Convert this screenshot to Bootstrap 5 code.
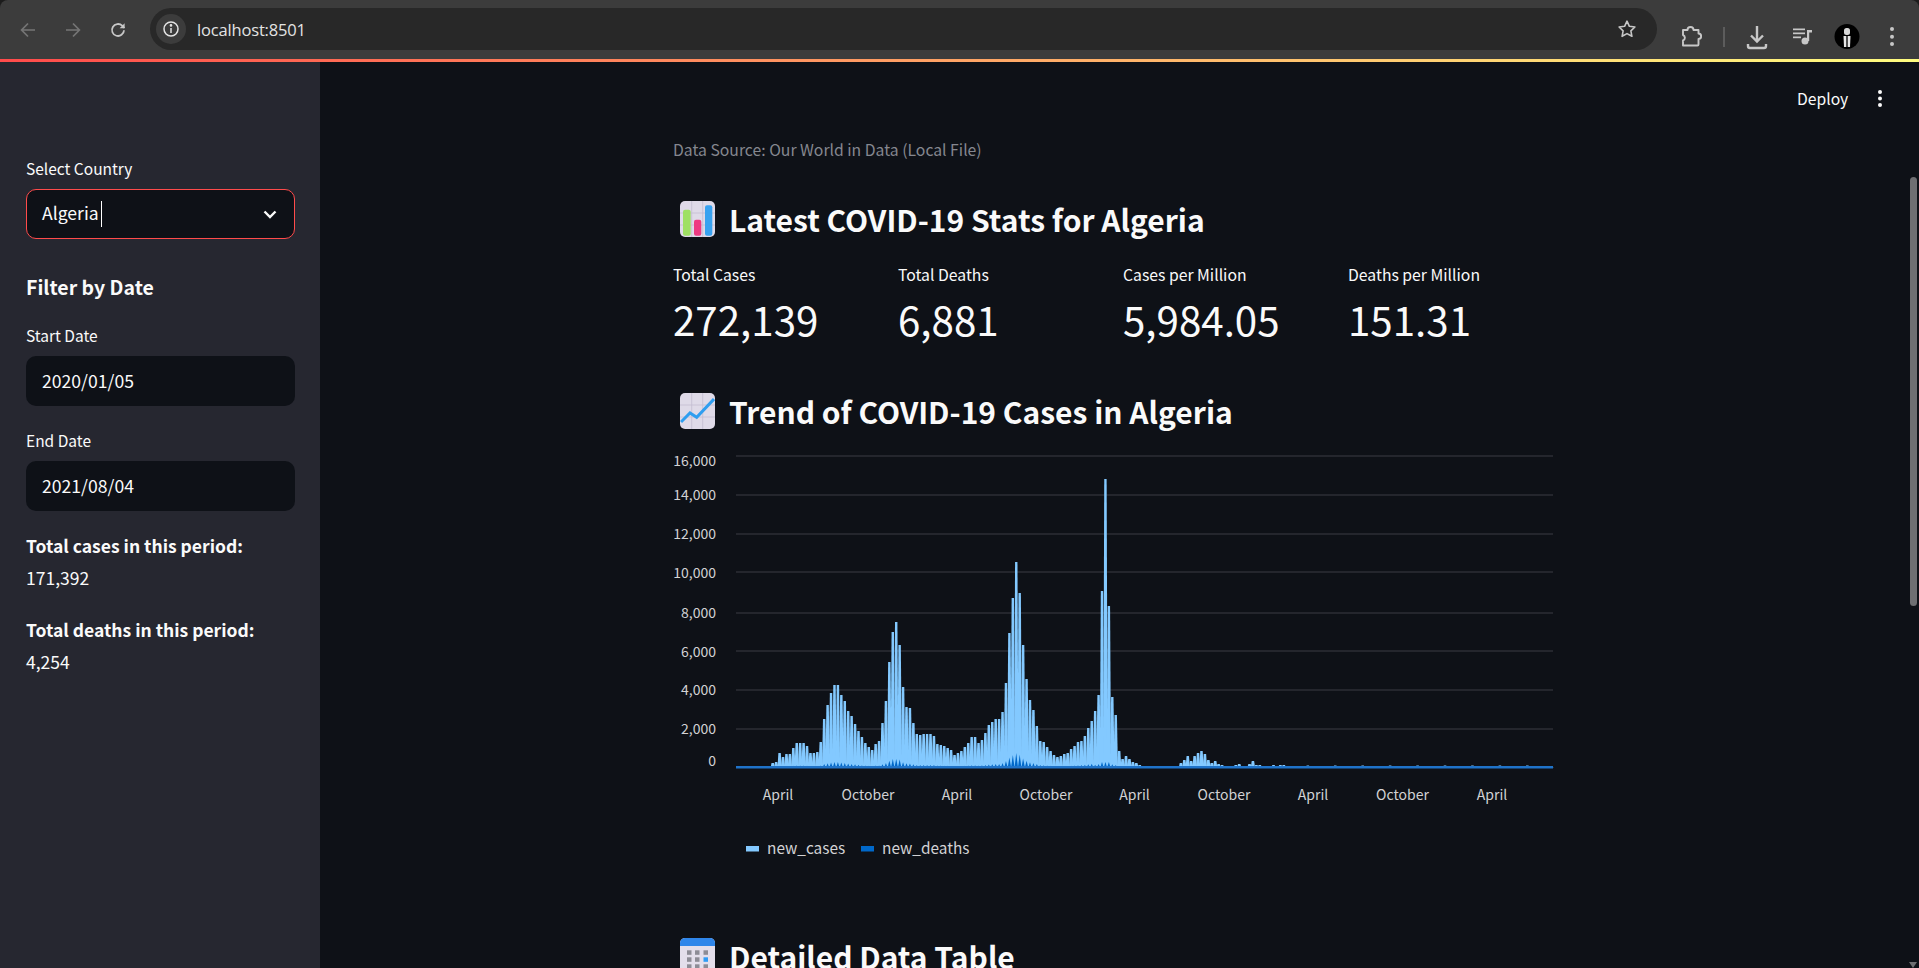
<!doctype html>
<html lang="en">
<head>
<meta charset="utf-8">
<title>localhost:8501</title>
<link rel="stylesheet" href="https://cdn.jsdelivr.net/npm/bootstrap@5.3.0/dist/css/bootstrap.min.css">
<style>
html,body{height:968px;overflow:hidden;background:#1c1c1c}
body{font-family:"Noto Sans CJK SC","Liberation Sans",sans-serif;color:#fafafa}
.chrome-bar{height:59px;background:#3c3c3c;border-radius:8px 8px 0 0;padding:8px 0}
.nav-ic{width:45px;height:42px}
.nav-ic:first-child{margin-left:5px}
.addr{margin-left:10px;width:1507px;height:42px;background:#282828;border-radius:21px;padding:0 20px 0 6px}
.site-ic{width:30px;height:30px;border-radius:50%;background:#3c3c3c}
.url{font:16.5px "Open Sans","Liberation Sans",sans-serif;color:#e3e3e3;margin-left:11px;letter-spacing:-.17px}
.tool-ic{position:absolute;top:8px;height:42px}
.tools{position:relative;flex:1}
.grad-line{height:3px;background:linear-gradient(90deg,#ff4b4b,#fffd80)}
.app{height:906px;background:#0e1117;position:relative;overflow:hidden}
.side{width:320px;background:#262730;padding:96px 25px 0 26px;flex:none}
.fld-label{font-size:15.5px;line-height:20px;color:#fafafa;height:20px}
.sel-box,.date-box{height:50px;border-radius:10px;background:#0e1117;font-size:17.6px;padding:0 16px;color:#fafafa}
.sel-box{border:1px solid #ff4b4b;margin-top:11px;padding-left:15px}
.sel-box span:first-child{margin-top:-2px}
.caret-line{width:1px;height:26px;background:#fff;margin-left:2px}
.date-box{margin-top:11px}
.side-title{font-size:19.5px;font-weight:600;line-height:28px;margin-top:34px}
.side-stat{font-size:17.5px;line-height:24px}
.side-stat b{font-weight:600}
.main-col{width:884px;margin-left:353px;padding-top:78px}
.src{font-size:15.75px;line-height:20px;color:#85878f}
.sec-h{font-size:30px;font-weight:600;line-height:44px;display:flex;align-items:center;color:#fafafa;padding-left:7px}
.sec-h svg{width:35px;height:36px;margin-right:14px;flex:none}
.m-label{font-size:15.75px;line-height:20px}
.m-val{font-size:40.3px;line-height:56px;font-weight:400;margin-top:6px}
.metric-grid{display:grid;grid-template-columns:repeat(4,209px);column-gap:16px}
.chart{display:block;width:884px;height:480px;margin-top:2px}
.chart text{font-family:"Noto Sans CJK SC","Liberation Sans",sans-serif;fill:#d2d2d4;font-size:14px}
.chart text.lgd{font-size:15.4px}
.deploy{position:absolute;top:25px;left:1797px;font-size:15.7px;line-height:24px}
.kebab{position:absolute;top:27px;left:1877px}
.scroll-thumb{position:absolute;left:1910px;top:115px;width:7px;height:429px;border-radius:4px;background:#6e6f72}
.scroll-arrow{position:absolute;left:1909px;top:900px;width:0;height:0;border:4.5px solid transparent;border-top:6px solid #6e6f72}
</style>
</head>
<body>
<header class="chrome-bar d-flex align-items-stretch">
  <div class="d-flex align-items-center">
    <div class="nav-ic d-flex align-items-center justify-content-center"><svg width="18" height="18" viewBox="0 0 18 18" fill="none" stroke="#757575" stroke-width="1.7"><path d="M16 9H3M9 2.5 2.6 9 9 15.5"/></svg></div>
    <div class="nav-ic d-flex align-items-center justify-content-center"><svg width="18" height="18" viewBox="0 0 18 18" fill="none" stroke="#757575" stroke-width="1.7"><path d="M2 9h13M9 2.5 15.4 9 9 15.5"/></svg></div>
    <div class="nav-ic d-flex align-items-center justify-content-center"><svg width="18" height="18" viewBox="0 0 18 18" fill="none" stroke="#c7c7c7" stroke-width="1.8"><path d="M15 9.2A6 6 0 1 1 13.2 4.7L15.4 7"/><path d="M15.6 2.2V7.2H10.6" stroke="none" fill="#c7c7c7"/></svg></div>
  </div>
  <div class="addr d-flex align-items-center">
    <div class="site-ic d-flex align-items-center justify-content-center"><svg width="18" height="18" viewBox="0 0 18 18" fill="none" stroke="#e3e3e3" stroke-width="1.5"><circle cx="9" cy="9" r="7"/><path d="M9 8v5"/><circle cx="9" cy="5.4" r=".6" fill="#e3e3e3"/></svg></div>
    <span class="url">localhost:8501</span>
    <svg class="ms-auto" width="20" height="20" viewBox="0 0 20 20" fill="none" stroke="#c7c7c7" stroke-width="1.6"><path d="M10 2.2l2.4 5.1 5.5.7-4 3.8 1 5.5-4.9-2.700-4.9 2.700 1-5.500-4-3.800 5.500-.7z" stroke-linejoin="round"/></svg>
  </div>
  <div class="tools">
    <svg class="tool-ic" style="left:23px" width="22" height="42" viewBox="0 0 22 42" fill="none" stroke="#c7c7c7" stroke-width="1.9"><path d="M3 14h4.500c0-4 6-4 6 0h5v3.500c3.500 0 3.500 5.500 0 5.500v5.500a1 1 0 0 1-1 1H3v-5c2.500-1 2.500-4.500 0-5.500z" stroke-linejoin="round"/></svg>
    <svg class="tool-ic" style="left:66px" width="2" height="42" viewBox="0 0 2 42"><rect y="11" width="2" height="20" fill="#5c5c5c"/></svg>
    <svg class="tool-ic" style="left:88px" width="24" height="42" viewBox="0 0 24 42" fill="none" stroke="#c7c7c7" stroke-width="2.4"><path d="M12 10v15M6 19.500l6 6 6-6"/><path d="M3 28v2a2 2 0 0 0 2 2h14a2 2 0 0 0 2-2v-2"/></svg>
    <svg class="tool-ic" style="left:135px" width="22" height="42" viewBox="0 0 22 42" fill="#c7c7c7"><rect x="1" y="12.500" width="12" height="1.7"/><rect x="1" y="16.500" width="12" height="1.7"/><rect x="1" y="20.500" width="8" height="1.7"/><circle cx="13" cy="25" r="3.500"/><path d="M15 14h5v2.500h-2.800V25H15z"/></svg>
    <svg class="tool-ic" style="left:177px" width="26" height="42" viewBox="0 0 26 42"><circle cx="13" cy="20.500" r="12.500" fill="#000"/><rect x="10" y="12" width="6" height="7" rx="2.500" fill="#d8d8d8"/><path d="M9.500 20h7l-.5 11h-6z" fill="#e8e8e8"/><path d="M12.300 20h1.400v11h-1.400z" fill="#111"/></svg>
    <svg class="tool-ic" style="left:233px" width="4" height="42" viewBox="0 0 4 42" fill="#c7c7c7"><circle cx="2" cy="13" r="2"/><circle cx="2" cy="20.700" r="2"/><circle cx="2" cy="28" r="2"/></svg>
  </div>
</header>
<div class="grad-line"></div>
<div class="app d-flex">
  <aside class="side">
    <div class="fld-label">Select Country</div>
    <div class="sel-box d-flex align-items-center">
      <span>Algeria</span><span class="caret-line"></span>
      <svg class="ms-auto" style="margin-right:1px" width="14" height="9" viewBox="0 0 14 9" fill="none" stroke="#fafafa" stroke-width="2.4"><path d="M1.500 1.500l5.500 5.500 5.500-5.500"/></svg>
    </div>
    <div class="side-title">Filter by Date</div>
    <div class="fld-label mt-4">Start Date</div>
    <div class="date-box d-flex align-items-center">2020/01/05</div>
    <div class="fld-label" style="margin-top:24px">End Date</div>
    <div class="date-box d-flex align-items-center">2021/08/04</div>
    <div class="side-stat" style="margin-top:23px"><b>Total cases in this period:</b></div>
    <div class="side-stat" style="margin-top:8px">171,392</div>
    <div class="side-stat" style="margin-top:28px"><b>Total deaths in this period:</b></div>
    <div class="side-stat" style="margin-top:8px">4,254</div>
  </aside>
  <main class="main-col">
    <div class="src">Data Source: Our World in Data (Local File)</div>
    <h2 class="sec-h m-0" style="margin-top:37px !important">
      <svg viewBox="0 0 35 36"><rect width="35" height="36" rx="5" fill="#dfdae8"/><path d="M11.700 0v36M22.700 0v36M0 12h35M0 24h35" stroke="#c3bdd0" stroke-width=".8"/><rect x="3" y="8.700" width="7.700" height="26" rx="2" fill="#9fe063"/><rect x="14" y="18.700" width="7.300" height="16" rx="2" fill="#ee3a82"/><rect x="25" y="4.300" width="7.300" height="30.500" rx="2" fill="#38a2f0"/></svg>
      Latest COVID-19 Stats for Algeria
    </h2>
    <div class="metric-grid" style="margin-top:24px">
      <div><div class="m-label">Total Cases</div><div class="m-val">272,139</div></div>
      <div><div class="m-label">Total Deaths</div><div class="m-val">6,881</div></div>
      <div><div class="m-label">Cases per Million</div><div class="m-val">5,984.05</div></div>
      <div><div class="m-label">Deaths per Million</div><div class="m-val">151.31</div></div>
    </div>
    <h2 class="sec-h m-0" style="margin-top:42px !important">
      <svg viewBox="0 0 35 36"><rect width="35" height="36" rx="5" fill="#dfdae8"/><path d="M11.700 0v36M22.700 0v36M0 12h35M0 24h35" stroke="#c3bdd0" stroke-width=".8"/><path d="M1 29l9-9 6.700 4.300L34 6" fill="none" stroke="#2f9ef0" stroke-width="3"/></svg>
      Trend of COVID-19 Cases in Algeria
    </h2>
    <svg class="chart" id="trend" viewBox="673 435 884 480" aria-label="Trend chart"></svg>
    <h2 class="sec-h m-0" style="margin-top:19px !important">
      <svg viewBox="0 0 35 36"><rect width="35" height="36" rx="5" fill="#e3deeb"/><path d="M0 8V5a5 5 0 0 1 5-5h25a5 5 0 0 1 5 5v3z" fill="#2f86ea"/><g fill="#8d8c96"><rect x="7" y="12.300" width="4.500" height="4.500"/><rect x="15" y="12.300" width="4.500" height="4.500"/><rect x="23.500" y="12.300" width="4.500" height="4.500"/><rect x="7" y="19.300" width="4.500" height="4.500"/><rect x="15" y="19.300" width="4.500" height="4.500"/><rect x="7" y="26.300" width="4.500" height="4.500"/><rect x="15" y="26.300" width="4.500" height="4.500"/><rect x="23.500" y="26.300" width="4.500" height="4.500"/></g><rect x="23.500" y="19.300" width="4.500" height="4.500" fill="#2f9bf5"/></svg>
      Detailed Data Table
    </h2>
  </main>
  <div class="deploy">Deploy</div>
  <svg class="kebab" width="6" height="20" viewBox="0 0 6 20" fill="#fafafa"><circle cx="3" cy="3" r="2"/><circle cx="3" cy="9.500" r="2"/><circle cx="3" cy="16" r="2"/></svg>
  <div class="scroll-thumb"></div>
  <div class="scroll-arrow"></div>
</div>
<script src="https://cdn.jsdelivr.net/npm/bootstrap@5.3.0/dist/js/bootstrap.bundle.min.js"></script>
<script>
(function(){
  var grid=[456,495,534,572,613,651,690,729];
  var ylab=[[461,'16,000'],[495,'14,000'],[534,'12,000'],[573,'10,000'],[613,'8,000'],[652,'6,000'],[690,'4,000'],[729,'2,000'],[761,'0']];
  var xlab=[778,868,957,1046,1134.5,1224,1313,1402.5,1492];
  var cases=[2,5,6,15,11,14,14,20,25,25,25,22,15,15,16,26,49,63,75,83,83,73,67,57,52,44,37,31,25,21,18,24,27,45,67,106,136,146,123,81,61,60,45,34,33,34,34,34,32,24,23,22,20,18,13,15,17,21,25,31,31,25,28,35,43,46,49,49,56,85,135,170,206,175,123,89,68,58,42,27,26,21,17,13,11,12,14,15,19,22,26,27,32,40,47,57,73,177,289,162,71,53,17,9,12,9,6,5,3,2,2,1,1,1,2,1,1,2,2,2,5,8,12,7,12,15,17,14,8,5,7,4,3,2,2,2,3,4,1,2,4,7,3,3,2,2,2,3,2,3,3,2,2,2,2];
  var s='';
  grid.forEach(function(y){s+='<line x1="736" x2="1553" y1="'+y+'" y2="'+y+'" stroke="#2c2e36" stroke-width="1.5"/>';});
  var x0=769.3,st=3.43,base=768;
  for(var i=0,n=Math.ceil((1553-x0)/st);i<n;i++){
    var h=i<cases.length?cases[i]:[1.5,1,2,1,1,2.5,1,1.5][i%8];
    var x=x0+i*st;
    s+='<polygon fill="#83c9ff" points="'+(x-1.2)+','+(base-h)+' '+(x+1.2)+','+(base-h)+' '+(x+2.2)+','+base+' '+(x-2.2)+','+base+'"/>';
  }
  for(i=0;i<n;i++){
    var c=i<cases.length?cases[i]:1,x=x0+i*st,d;
    if(x<1000)d=Math.min(8,c*.06)+1;else if(x<1095)d=Math.min(14,c*.07)+1;else d=Math.min(5,c*.04)+1;
    s+='<polygon fill="#0068c9" points="'+(x-1.8)+','+base+' '+x+','+(base-d)+' '+(x+1.8)+','+base+'"/>';
  }
  s+='<rect x="736" y="766" width="817" height="2.5" fill="#1f73c9"/>';
  ylab.forEach(function(l){s+='<text x="716" y="'+(l[0]+5)+'" text-anchor="end">'+l[1]+'</text>';});
  xlab.forEach(function(x,i){s+='<text x="'+x+'" y="800" text-anchor="middle">'+(i%2?'October':'April')+'</text>';});
  s+='<rect x="746" y="846" width="13" height="5.5" fill="#83c9ff"/><text class="lgd" x="767" y="854">new_cases</text>';
  s+='<rect x="861" y="846" width="13" height="5.5" fill="#0068c9"/><text class="lgd" x="882" y="854">new_deaths</text>';
  document.getElementById('trend').innerHTML=s;
})();
</script>
</body>
</html>
